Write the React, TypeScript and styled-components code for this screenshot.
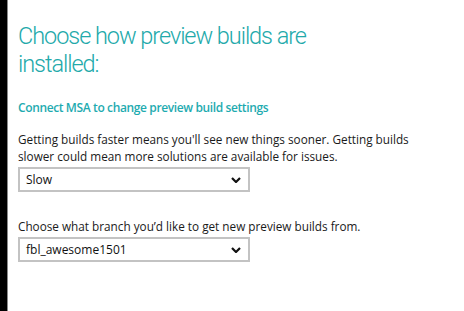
import React from "react";
import styled, { createGlobalStyle } from "styled-components";

const Global = createGlobalStyle`
  html, body { margin: 0; padding: 0; background: #ffffff; }
  #root { height: 311px; }
`;

const Page = styled.div`
  display: flex;
  height: 311px;
  width: 464px;
  overflow: hidden;
  font-family: "Open Sans", "Noto Sans", sans-serif;
`;

const Rail = styled.div`
  width: 7px;
  flex: none;
  background: #000000;
  border-right: 1px solid #8a8a8a;
`;

const Content = styled.div`
  display: flex;
  flex-direction: column;
  padding: 22px 0 0 10px;
`;

const Heading = styled.h1`
  margin: 0;
  font-family: "Roboto", "Open Sans", sans-serif;
  font-weight: 300;
  font-size: 23.5px;
  line-height: 28px;
  letter-spacing: -1.05px;
  color: #22a9aa;
  white-space: nowrap;
`;

const Link = styled.a`
  margin-top: 22px;
  font-size: 12px;
  font-weight: 600;
  letter-spacing: -0.38px;
  color: #1eabb0;
  text-decoration: none;
  line-height: 16px;
`;

const Text = styled.p<{ $top: number }>`
  margin: ${(p) => p.$top}px 0 0 0;
  font-size: 11.75px;
  line-height: 17px;
  color: #1a1a1a;
  width: 420px;
`;

const Select = styled.div`
  margin-top: 2px;
  width: 215px;
  height: 21px;
  border: 2px solid #c3c3c3;
  display: flex;
  align-items: center;
  justify-content: space-between;
  padding: 0 7px 0 6px;
  box-sizing: content-box;
  font-size: 12px;
  color: #111111;
`;

const Chevron = () => (
  <svg width="10" height="6" viewBox="0 0 10 6">
    <path d="M1 1 L5 5 L9 1" fill="none" stroke="#111" strokeWidth="2.2" />
  </svg>
);

const Dropdown = styled.div`
  display: flex;
  flex-direction: column;
`;

export default function App() {
  return (
    <>
      <Global />
      <Page>
        <Rail />
        <Content>
          <Heading>
            Choose how preview builds are
            <br />
            installed:
          </Heading>
          <Link href="#">Connect MSA to change preview build settings</Link>
          <Dropdown>
            <Text $top={15}>
              Getting builds faster means you'll see new things sooner. Getting builds slower could mean more
              solutions are available for issues.
            </Text>
            <Select>
              <span>Slow</span>
              <Chevron />
            </Select>
          </Dropdown>
          <Dropdown>
            <Text $top={26}>Choose what branch you’d like to get new preview builds from.</Text>
            <Select>
              <span>fbl_awesome1501</span>
              <Chevron />
            </Select>
          </Dropdown>
        </Content>
      </Page>
    </>
  );
}
